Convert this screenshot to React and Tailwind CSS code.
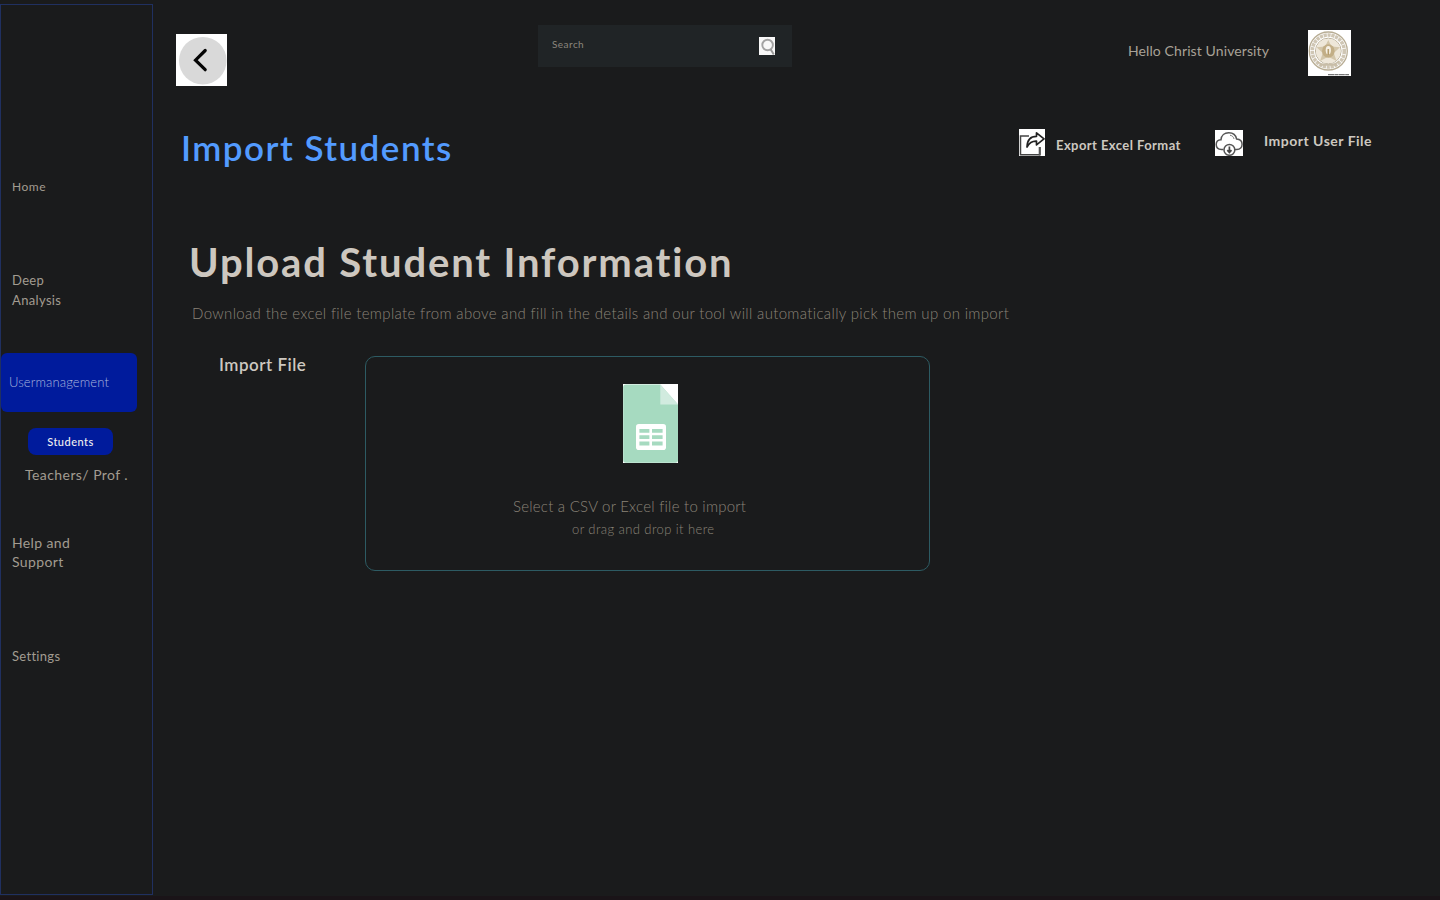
function BackIcon() {
  return (
    <svg viewBox="0 0 51 52" className="block h-[52px] w-[51px]">
      <rect width="51" height="52" fill="#fff" />
      <ellipse cx="26.8" cy="26.7" rx="23.8" ry="23.8" fill="#d9d9d9" />
      <path d="M29.2 16.5 19.5 26.2 29.2 35.7" fill="none" stroke="#050505" strokeWidth="3.2" strokeLinecap="round" strokeLinejoin="miter" />
    </svg>
  );
}

function SearchIcon() {
  return (
    <svg viewBox="0 0 16 18" className="block h-[18px] w-4">
      <rect width="16" height="18" fill="#f8f8f8" />
      <circle cx="8.6" cy="8" r="5.3" fill="none" stroke="#a3a3a3" strokeWidth="1.9" />
      <path d="m11.6 12.2 3.2 5.2" stroke="#999" strokeWidth="2" />
    </svg>
  );
}

function UniversitySeal() {
  return (
    <svg viewBox="0 0 43 46" className="block h-[46px] w-[43px]">
      <rect width="43" height="46" fill="#fff" />
      <g fill="none" stroke="#b8ad94">
        <circle cx="20.3" cy="21" r="19" strokeWidth="1.3" />
        <circle cx="20.3" cy="21" r="16" stroke="#cfc6b4" strokeWidth="3.6" strokeDasharray="3.2 .7" />
        <circle cx="20.3" cy="21" r="12.8" strokeWidth="1" />
      </g>
      <circle cx="20.3" cy="21" r="12.3" fill="#eee7d9" />
      <path d="m20.3 10 3.2 6.500 8.500.7-6.200 5.700 2.800 8.100-8.300-4.200-8.300 4.200 2.800-8.100-6.200-5.700 8.500-.7z" fill="#d3c6aa" />
      <ellipse cx="20.3" cy="21" rx="6.300" ry="6.800" fill="#c2ae86" />
      <ellipse cx="20.3" cy="20.300" rx="2.600" ry="4.200" fill="#f6f0e4" />
      <path d="M20.3 19v6" stroke="#b59c6b" strokeWidth="1.600" />
      <path d="M9 31c4 5 18 5 22 0M12 35h17" fill="none" stroke="#c8bda7" strokeWidth="1.300" />
      <path d="M20 44.700h21" stroke="#777" strokeWidth="1.300" strokeDasharray="6 .4 4 .4" />
    </svg>
  );
}

function ExportIcon() {
  return (
    <svg viewBox="0 0 26 27" className="block h-[27px] w-[26px]">
      <rect width="26" height="27" fill="#fff" />
      <path d="M10 7H1.500v18.800H21" fill="none" stroke="#444" strokeWidth="1.500" />
      <path d="M20.800 18v8.500" stroke="#555" strokeWidth="2.200" />
      <path d="M8 18C8.200 10.500 12 7.300 17.500 7.300V3.800L25 9.900l-7.500 6v-3.700C13 12 10.500 13.500 8 18Z" fill="#fff" stroke="#222" strokeWidth="1.700" strokeLinejoin="round" />
    </svg>
  );
}

function CloudIcon() {
  return (
    <svg viewBox="0 0 28 26" className="block h-[26px] w-7">
      <rect width="28" height="26" fill="#fff" />
      <path d="M8.500 19.500H6.500C3 19.500 1.200 17.200 1.200 14.600 1.200 11.800 3.300 9.900 6 9.800 6.300 5.300 9.700 2.700 13.700 2.700c4.200 0 7.200 2.400 7.900 6.300 3.600.2 5.500 2.600 5.500 5.300 0 2.900-2 5.200-5.300 5.200H20" fill="none" stroke="#555" strokeWidth="1.500" />
      <path d="M15 5.200c2.200.4 3.500 1.700 4 3.700" fill="none" stroke="#777" />
      <circle cx="14.400" cy="19.900" r="5.400" fill="#fff" stroke="#555" strokeWidth="1.500" />
      <path d="M14.400 16.600v5.700m-2.100-2.100 2.100 2.200 2.100-2.200" fill="none" stroke="#444" strokeWidth="1.700" />
    </svg>
  );
}

function SheetIcon() {
  return (
    <svg viewBox="0 0 55 79" className="block h-[79px] w-[55px]">
      <rect width="55" height="79" fill="#fff" />
      <path d="M3 .5h34.300L55 20.500V76q0 2.700-2.700 2.700H2.700Q.2 78.700.2 76V3.300Q.2.500 3 .500Z" fill="#a6dac0" />
      <path d="M37.300.5 55 20.500H37.300Z" fill="#d1ebdf" />
      <rect x="13" y="40" width="30" height="26" rx="2.800" fill="#fff" />
      <path d="M16.400 45h10v3.800h-10zM29 45h10.600v3.800H29zM16.400 51.300h10V55h-10zM29 51.300h10.600V55H29zM16.400 57.600h10v3.800h-10zM29 57.600h10.600v3.800H29z" fill="#a6dac0" />
    </svg>
  );
}

function Sidebar() {
  return (
    <aside className="mt-1 h-[891px] w-[153px] shrink-0 border border-[#203060] text-[#a29c91]">
      <nav className="flex flex-col items-start whitespace-nowrap">
        <a className="mt-[172px] ml-[11px] text-[12px] leading-5 tracking-[0.5px]">Home</a>
        <a className="mt-[73px] ml-[11px] text-[13px] leading-5 tracking-[0.35px]">Deep<br />Analysis</a>
        <a className="mt-[43px] flex h-[59px] w-[136px] items-center rounded-md bg-[#001b9c] pl-2 text-[13px] font-light tracking-[0.12px] text-[#a9b5dc]">Usermanagement</a>
        <a className="mt-4 ml-[27px] flex h-[27px] w-[85px] items-center justify-center rounded-lg bg-[#001b9c] pt-0.5 text-[11px] font-medium tracking-[0.5px] text-[#f0f0f0]">Students</a>
        <a className="mt-[10px] ml-6 text-[14px] leading-5 tracking-[0.43px]">Teachers/ Prof .</a>
        <a className="mt-[48px] ml-[11px] text-[14px] leading-[19px] tracking-[0.38px]">Help and<br />Support</a>
        <a className="mt-[75px] ml-[11px] text-[13px] leading-5 tracking-[0.3px]">Settings</a>
      </nav>
    </aside>
  );
}

function Header() {
  return (
    <header className="flex h-[86px] items-start pl-[23px]">
      <button className="mt-[34px]"><BackIcon /></button>
      <div className="mt-[25px] ml-[311px] flex h-[42px] w-[254px] items-start justify-between bg-[#202426] pr-[17px] pl-[14px]">
        <span className="mt-[9px] text-[10px] leading-5 tracking-[0.45px] text-[#8b867d]">Search</span>
        <span className="mt-3"><SearchIcon /></span>
      </div>
      <span className="mt-[41px] ml-[336px] w-[180px] text-[14px] leading-5 tracking-[0.1px] text-[#a8a297]">Hello Christ University</span>
      <span className="mt-[30px]"><UniversitySeal /></span>
    </header>
  );
}

function TitleBar() {
  return (
    <div className="flex h-[106px] items-start pl-7">
      <h1 className="mt-[36px] w-[838px] text-[35px] leading-[50px] font-semibold tracking-[1.48px] text-[#539bff]">Import Students</h1>
      <span className="mt-[43px]"><ExportIcon /></span>
      <span className="mt-[49px] ml-[11px] w-[159px] text-[13px] leading-5 font-bold tracking-[0.43px] text-[#cdc8c0]">Export Excel Format</span>
      <span className="mt-[44px]"><CloudIcon /></span>
      <span className="mt-[45px] ml-[21px] text-[14px] leading-5 font-bold tracking-[0.5px] text-[#cdc8c0]">Import User File</span>
    </div>
  );
}

export default function App() {
  return (
    <div className="flex h-[900px] w-[1440px] flex-col overflow-hidden bg-[#1a1b1c] font-['Lato',sans-serif] whitespace-nowrap">
      <div className="flex h-[896px]">
        <Sidebar />
        <main className="min-w-0 flex-1">
          <Header />
          <TitleBar />
          <section>
            <h2 className="mt-[45px] ml-9 text-[40px] leading-[50px] font-bold tracking-[1.85px] text-[#cdc7bf]">Upload Student Information</h2>
            <p className="mt-4 ml-[39px] text-[15px] leading-5 font-light tracking-[0.34px] text-[#8a8378]">
              Download the excel file template from above and fill in the details and our tool will automatically pick them up on import
            </p>
            <div className="mt-8 flex items-start pl-[66px]">
              <span className="w-[146px] text-[17px] leading-5 font-semibold tracking-[0.5px] text-[#cdc8c0]">Import File</span>
              <div className="mt-px flex h-[215px] w-[565px] flex-col items-start rounded-[10px] border border-[#2d5b63] text-[#8a8378]">
                <span className="mt-[27px] ml-[257px]"><SheetIcon /></span>
                <span className="mt-[33px] ml-[147px] text-[15px] leading-5 font-light tracking-[0.24px]">Select a CSV or Excel file to import</span>
                <span className="mt-[3px] ml-[206px] text-[13px] leading-5 font-light tracking-[0.42px]">or drag and drop it here</span>
              </div>
            </div>
          </section>
        </main>
      </div>
      <div className="h-1 bg-[#1a1418]" />
    </div>
  );
}
